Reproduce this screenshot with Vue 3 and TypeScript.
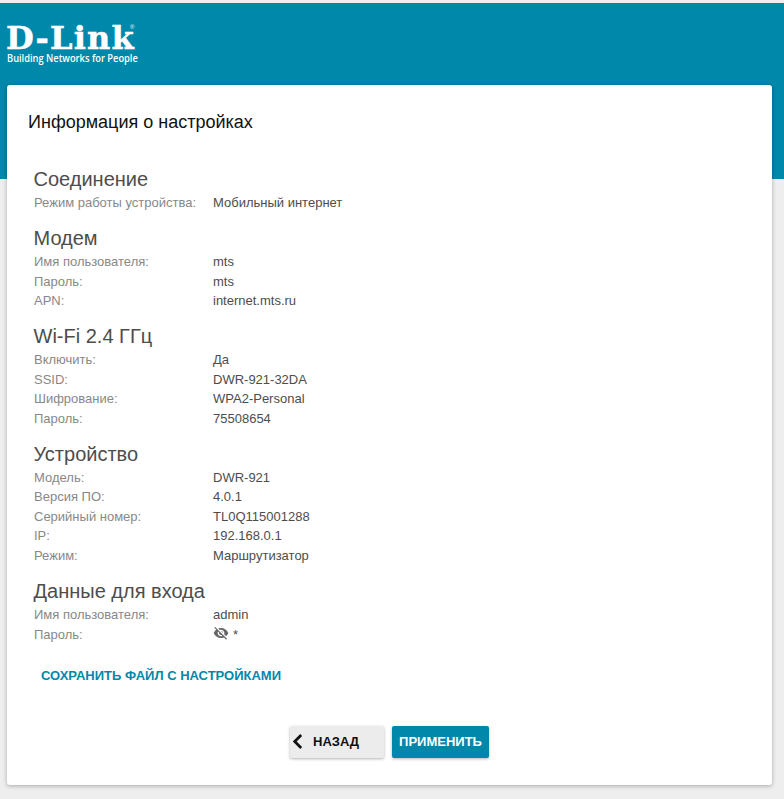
<template>
  <div class="page">
    <header class="top">
      <div class="logo">
        <div class="logo-name">D-Link<sup class="reg">®</sup></div>
        <div class="logo-tag">Building Networks for People</div>
      </div>
    </header>
    <main class="card">
      <h1 class="title">Информация о настройках</h1>
      <section v-for="group in groups" :key="group.name" class="group">
        <h2 class="group-name">{{ group.name }}</h2>
        <div v-for="row in group.rows" :key="row.label" class="row">
          <span class="label">{{ row.label }}</span>
          <span class="value">{{ row.value }}</span>
        </div>
      </section>
      <div class="row last-row">
        <span class="label">Пароль:</span>
        <span class="value secret">
          <svg class="eye" viewBox="0 0 24 24" width="16" height="16">
            <path fill="#666" d="M12 7c2.76 0 5 2.24 5 5 0 .65-.13 1.26-.36 1.83l2.92 2.92c1.51-1.26 2.7-2.89 3.43-4.75-1.73-4.39-6-7.5-11-7.5-1.4 0-2.74.25-3.98.7l2.16 2.16C10.74 7.13 11.35 7 12 7zM2 4.27l2.28 2.28.46.46C3.08 8.3 1.78 10.02 1 12c1.73 4.39 6 7.5 11 7.5 1.55 0 3.03-.3 4.38-.84l.42.42L19.73 22 21 20.73 3.27 3 2 4.27zM7.53 9.8l1.55 1.55c-.05.21-.08.43-.08.65 0 1.66 1.34 3 3 3 .22 0 .44-.03.65-.08l1.55 1.55c-.67.33-1.41.53-2.2.53-2.76 0-5-2.24-5-5 0-.79.2-1.53.53-2.2zm4.31-.78l3.15 3.15.02-.16c0-1.66-1.34-3-3-3l-.17.01z"/>
          </svg>
          <span class="star">*</span>
        </span>
      </div>
      <a class="save">СОХРАНИТЬ ФАЙЛ С НАСТРОЙКАМИ</a>
      <div class="actions">
        <button class="btn back">
          <svg class="chevron" viewBox="0 0 12 18" width="11" height="17">
            <path d="M10 2 L3 9 L10 16" fill="none" stroke="#111" stroke-width="3"/>
          </svg>
          <span>НАЗАД</span>
        </button>
        <button class="btn apply">ПРИМЕНИТЬ</button>
      </div>
    </main>
  </div>
</template>

<script setup lang="ts">
interface Row {
  label: string;
  value: string;
}

interface Group {
  name: string;
  rows: Row[];
}

const groups: Group[] = [
  {
    name: 'Соединение',
    rows: [{ label: 'Режим работы устройства:', value: 'Мобильный интернет' }]
  },
  {
    name: 'Модем',
    rows: [
      { label: 'Имя пользователя:', value: 'mts' },
      { label: 'Пароль:', value: 'mts' },
      { label: 'APN:', value: 'internet.mts.ru' }
    ]
  },
  {
    name: 'Wi-Fi 2.4 ГГц',
    rows: [
      { label: 'Включить:', value: 'Да' },
      { label: 'SSID:', value: 'DWR-921-32DA' },
      { label: 'Шифрование:', value: 'WPA2-Personal' },
      { label: 'Пароль:', value: '75508654' }
    ]
  },
  {
    name: 'Устройство',
    rows: [
      { label: 'Модель:', value: 'DWR-921' },
      { label: 'Версия ПО:', value: '4.0.1' },
      { label: 'Серийный номер:', value: 'TL0Q115001288' },
      { label: 'IP:', value: '192.168.0.1' },
      { label: 'Режим:', value: 'Маршрутизатор' }
    ]
  },
  {
    name: 'Данные для входа',
    rows: [{ label: 'Имя пользователя:', value: 'admin' }]
  }
];
</script>

<style>
html,
body {
  margin: 0;
  background: #eeeeee;
}
</style>

<style scoped>
.page {
  height: 799px;
  overflow: hidden;
  padding-top: 3px;
  box-sizing: border-box;
  font-family: "Liberation Sans", Arial, sans-serif;
}

.top {
  height: 176px;
  background: #0088ab;
  padding: 21px 0 0 7px;
  box-sizing: border-box;
}

.logo {
  color: #fff;
  width: 132px;
}

.logo-name {
  font-family: "DejaVu Serif", serif;
  font-weight: 700;
  font-size: 32px;
  line-height: 28px;
  letter-spacing: 1.2px;
  height: 28px;
  white-space: nowrap;
  margin-left: -1px;
  -webkit-text-stroke: 0.5px #fff;
}

.reg {
  font-size: 6px;
  line-height: 0;
  vertical-align: 20px;
  letter-spacing: 0;
  margin-left: -5px;
  font-family: "Liberation Sans", sans-serif;
  font-weight: 400;
  -webkit-text-stroke: 0;
}

.logo-tag {
  font-family: "Open Sans", sans-serif;
  font-weight: 600;
  font-size: 10.5px;
  line-height: 11px;
  margin-top: 1px;
  white-space: nowrap;
  transform-origin: left center;
  transform: scaleX(0.885);
}

.card {
  margin: -94px 12px 0 7px;
  height: 700px;
  box-sizing: border-box;
  background: #fff;
  border-radius: 3px;
  box-shadow: 0 1px 4px rgba(0, 0, 0, 0.3);
  padding: 26px 27px 0 27px;
}

.title {
  margin: 0 0 0 -6px;
  font-size: 18px;
  line-height: 22px;
  font-weight: 400;
  color: #111;
}

.title + .group {
  margin-top: 32px;
}

.group + .group {
  margin-top: 11.5px;
}

.group-name {
  margin: 0 0 0 -0.5px;
  font-size: 20px;
  line-height: 28px;
  font-weight: 400;
  color: #4d4d4d;
}

.row {
  display: flex;
  height: 19.5px;
  line-height: 19.5px;
  font-size: 13px;
}

.last-row {
  margin-top: 0.5px;
}

.label {
  width: 179px;
  color: #888;
  flex-shrink: 0;
}

.value {
  color: #4d4d4d;
}

.secret {
  display: flex;
  align-items: flex-start;
  gap: 4px;
}

.eye {
  margin: 0;
}

.star {
  line-height: 19px;
}

.save {
  display: block;
  margin: 22.5px 0 0 7px;
  font-size: 13px;
  line-height: 18px;
  font-weight: 700;
  color: #0088ab;
}

.actions {
  display: flex;
  justify-content: center;
  gap: 8px;
  margin: 41px 0 0 0;
}

.btn {
  height: 32px;
  border: none;
  border-radius: 2px;
  font-family: inherit;
  font-size: 13px;
  font-weight: 700;
  box-shadow: 0 1px 3px rgba(0, 0, 0, 0.3);
  padding: 0;
}

.back {
  width: 94px;
  background: #ececec;
  color: #111;
  display: flex;
  align-items: center;
  gap: 10px;
  padding-left: 2px;
  box-sizing: border-box;
}

.apply {
  width: 97px;
  background: #0088ab;
  color: #fff;
}
</style>
